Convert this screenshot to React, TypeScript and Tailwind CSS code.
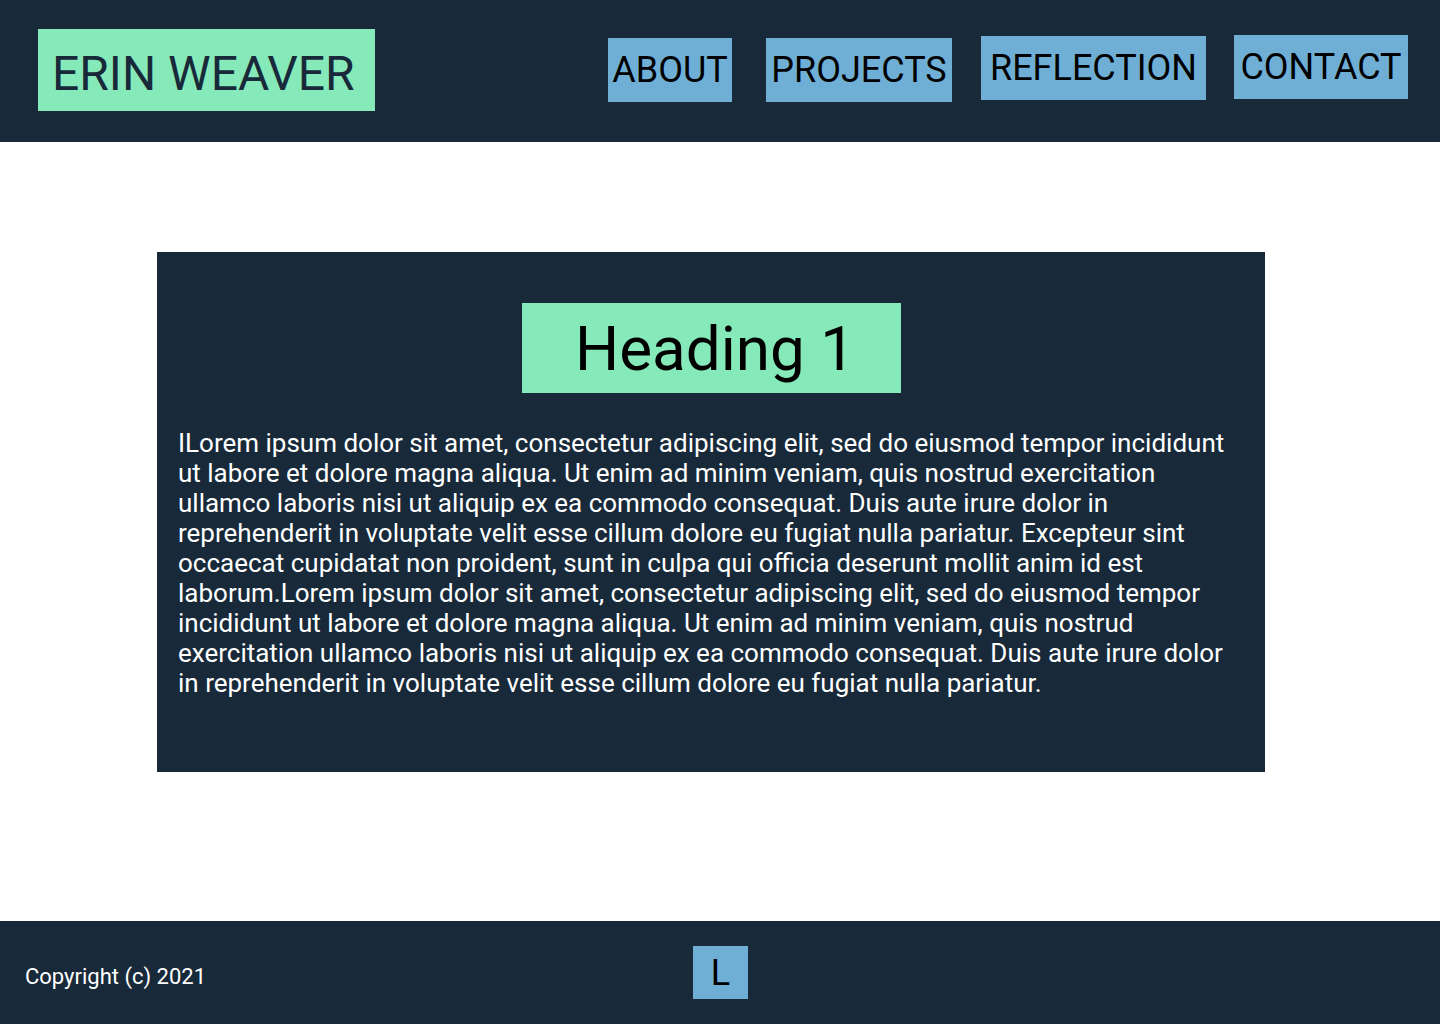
import React from 'react';

const navItems = [
  { label: 'ABOUT', cls: 'mt-[38px] w-[124px]' },
  { label: 'PROJECTS', cls: 'mt-[38px] w-[186px]' },
  { label: 'REFLECTION', cls: 'mt-[36px] w-[225px] ml-[-5px]' },
  { label: 'CONTACT', cls: 'mt-[35px] w-[174px] ml-[-6px]' },
];

const lorem =
  'ILorem ipsum dolor sit amet, consectetur adipiscing elit, sed do eiusmod tempor incididunt ut labore et dolore magna aliqua. Ut enim ad minim veniam, quis nostrud exercitation ullamco laboris nisi ut aliquip ex ea commodo consequat. Duis aute irure dolor in reprehenderit in voluptate velit esse cillum dolore eu fugiat nulla pariatur. Excepteur sint occaecat cupidatat non proident, sunt in culpa qui officia deserunt mollit anim id est laborum.Lorem ipsum dolor sit amet, consectetur adipiscing elit, sed do eiusmod tempor incididunt ut labore et dolore magna aliqua. Ut enim ad minim veniam, quis nostrud exercitation ullamco laboris nisi ut aliquip ex ea commodo consequat. Duis aute irure dolor in reprehenderit in voluptate velit esse cillum dolore eu fugiat nulla pariatur.';

const App: React.FC = () => {
  return (
    <div className="min-h-screen flex flex-col bg-white font-['Roboto',sans-serif]">
      <header className="h-[142px] bg-[#182a3a] flex items-start justify-between pl-[38px] pr-[32px]">
        <div className="mt-[29px] h-[82px] w-[337px] bg-[#86e9b9] flex items-center pl-[14px] pt-[7px]">
          <span className="text-[48px] leading-none text-[#182a3a]">ERIN WEAVER</span>
        </div>
        <nav className="flex items-start gap-[34px]">
          {navItems.map((item) => (
            <a
              key={item.label}
              href="#"
              className={`${item.cls} h-[64px] bg-[#6fafd6] flex items-center justify-center text-[36px] leading-none text-black`}
            >
              {item.label}
            </a>
          ))}
        </nav>
      </header>

      <main className="flex-1 flex justify-start pl-[157px] pt-[110px] pb-[149px]">
        <section className="w-[1108px] h-[520px] bg-[#182a3a] flex flex-col items-center pt-[51px] pl-[21px] pr-[30px]">
          <h1 className="ml-[9px] w-[379px] h-[90px] bg-[#86e9b9] flex items-center justify-center pl-[8px] pt-[2px] text-[62px] leading-none text-black">
            Heading 1
          </h1>
          <p className="mt-[35px] text-[26px] leading-[30px] text-white">{lorem}</p>
        </section>
      </main>

      <footer className="h-[103px] bg-[#182a3a] flex items-center relative px-[25px] pt-[8px]">
        <span className="text-[22px] text-white">Copyright (c) 2021</span>
        <div className="absolute left-[693px] top-[25px] w-[55px] h-[53px] bg-[#6fafd6] flex items-center justify-center text-[36px] leading-none text-black">
          L
        </div>
      </footer>
    </div>
  );
};

export default App;
